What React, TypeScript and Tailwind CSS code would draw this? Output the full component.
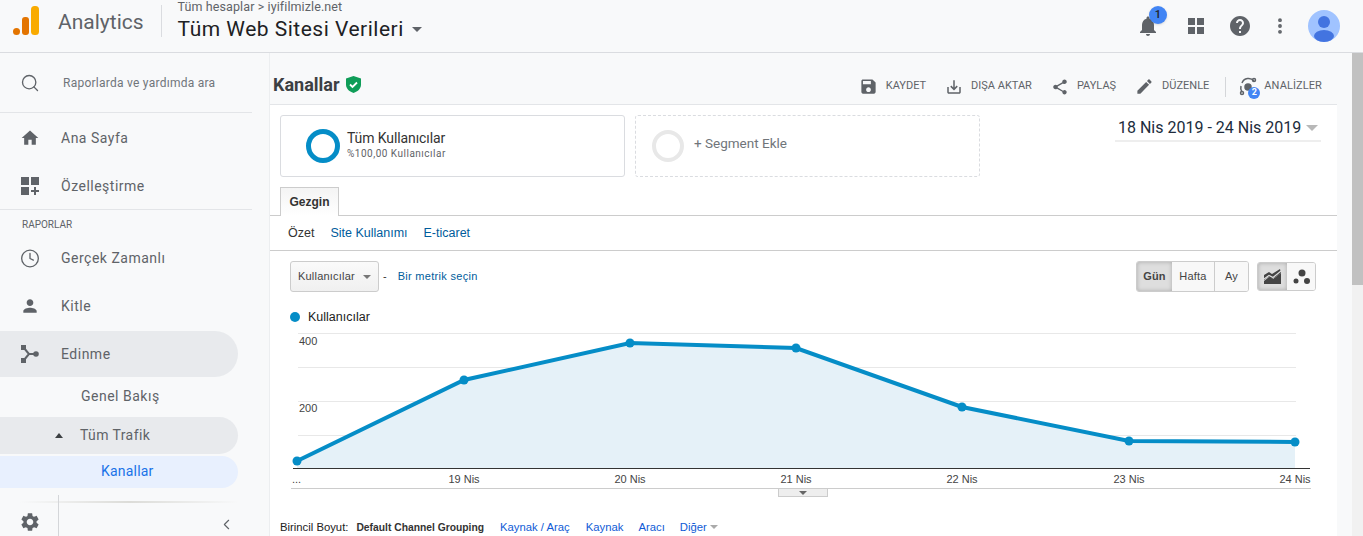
import React from 'react';
import { Search, Clock, ChevronLeft, MoreVertical } from 'lucide-react';

const points = [[297, 461], [464, 380], [630, 343], [796, 348], [962, 407], [1129, 441], [1295, 442]].map(([x, y]) => [x - 290, y - 330]);
const line = points.map((p) => p.join(',')).join(' ');

const Mat = ({ d, size = 20, className = '' }: { d: string; size?: number; className?: string }) => (
  <svg width={size} height={size} viewBox="0 0 24 24" fill="#5f6368" className={className}><path d={d} /></svg>
);

const NavItem = ({ icon, label, className = '' }: { icon: React.ReactNode; label: string; className?: string }) => (
  <div className={`h-[46px] w-[238px] flex items-center pl-[20px] rounded-r-[23px] ${className}`}>
    <span className="w-[20px] h-[20px] flex items-center justify-center text-[#5f6368] shrink-0">{icon}</span>
    <span className="ml-[21px] text-[14px] tracking-[0.5px] text-[#5f6368]">{label}</span>
  </div>
);

const Action = ({ icon, label }: { icon: React.ReactNode; label: string }) => (
  <div className="flex items-center gap-[8px]">
    {icon}
    <span className="text-[11px] text-[#5f6368]">{label}</span>
  </div>
);

const Sidebar = () => (
  <aside className="w-[270px] shrink-0 flex flex-col overflow-hidden relative border-r border-[#eceef0]">
    <div className="h-[60px] flex items-center pl-[20px] mr-[17px] border-b border-[#e3e5e8] shrink-0">
      <Search size={20} strokeWidth={1.6} className="text-[#5f6368]" />
      <span className="ml-[23px] text-[12px] tracking-[0.25px] text-[#70757a]">Raporlarda ve yardımda ara</span>
    </div>
    <div className="pt-[2px] pb-[1px] flex flex-col gap-[2px]">
      <NavItem icon={<Mat size={24} d="M10 20v-6h4v6h5v-8h3L12 3 2 12h3v8z" />} label="Ana Sayfa" />
      <NavItem icon={
        <svg width="20" height="20" viewBox="0 0 20 20" fill="#5f6368"><rect x="1" y="1" width="8" height="8" /><rect x="1" y="11" width="8" height="8" /><rect x="11" y="1" width="8" height="8" /><path d="M14 11h2v3h3v2h-3v3h-2v-3h-3v-2h3z" /></svg>
      } label="Özelleştirme" />
    </div>
    <div className="mr-[17px] border-t border-[#e3e5e8] h-[27px] pl-[22px] pt-[9px] mt-[-1px]">
      <span className="block text-[10px] leading-[12px] text-[#5f6368]">RAPORLAR</span>
    </div>
    <div className="flex flex-col gap-[2px] mt-[-1px]">
      <NavItem icon={<Clock size={21} strokeWidth={1.6} />} label="Gerçek Zamanlı" />
      <NavItem icon={<Mat size={24} d="M12 12c2.210 0 4-1.790 4-4s-1.790-4-4-4-4 1.790-4 4 1.790 4 4 4zm0 2c-2.670 0-8 1.340-8 4v2h16v-2c0-2.660-5.330-4-8-4z" />} label="Kitle" />
      <NavItem className="bg-[#e8eaed]" icon={
        <svg width="20" height="20" viewBox="0 0 20 20" fill="#5f6368"><rect x="1" y="1" width="5" height="5" /><rect x="1" y="14" width="5" height="5" /><circle cx="16" cy="10" r="2.800" /><path d="M4 4l5 6-5 6" stroke="#5f6368" strokeWidth="2" fill="none" /><path d="M9 10h6" stroke="#5f6368" strokeWidth="2" /></svg>
      } label="Edinme" />
    </div>
    <div className="h-[40px] flex items-center pb-[2px] pl-[81px] text-[14px] tracking-[0.5px] text-[#5f6368]">Genel Bakış</div>
    <div className="h-[37px] w-[238px] bg-[#e8eaed] rounded-r-[19px] flex items-center pl-[55px] text-[14px] tracking-[0.4px] text-[#5f6368]">
      <span className="w-0 h-0 border-x-[4px] border-x-transparent border-b-[5px] border-b-[#3c4043]" />
      <span className="ml-[17px]">Tüm Trafik</span>
    </div>
    <div className="h-[32px] w-[238px] mt-[2px] pb-[2px] bg-[#e8f0fe] rounded-r-[16px] flex items-center pl-[101px] text-[14px] tracking-[0.2px] text-[#1a73e8]">Kanallar</div>
    <div className="absolute left-[20px] right-[30px] top-[448px] h-[2px] bg-gradient-to-r from-transparent via-[#dcdcd8] to-transparent" />
    <div className="absolute left-0 bottom-0 w-[238px] h-[42px] flex items-end pb-[3px]">
      <span className="ml-[19px] w-[22px] h-[22px] flex items-center justify-center">
        <Mat size={24} d="M19.140 12.940c.04-.3.06-.61.06-.94 0-.32-.02-.64-.07-.94l2.030-1.580c.18-.14.23-.41.12-.61l-1.920-3.320c-.12-.22-.37-.29-.59-.22l-2.390.96c-.5-.38-1.030-.7-1.620-.94l-.36-2.540c-.04-.24-.24-.41-.48-.41h-3.840c-.24 0-.43.17-.47.41l-.36 2.540c-.59.24-1.130.57-1.620.94l-2.390-.96c-.22-.08-.47 0-.59.22L2.740 8.870c-.12.21-.08.47.12.61l2.030 1.580c-.05.3-.09.63-.09.94s.02.64.07.94l-2.030 1.580c-.18.14-.23.41-.12.61l1.920 3.320c.12.22.37.29.59.22l2.390-.96c.5.38 1.030.7 1.620.94l.36 2.540c.05.24.24.41.48.41h3.840c.24 0 .44-.17.47-.41l.36-2.540c.59-.24 1.130-.56 1.620-.94l2.390.96c.22.08.47 0 .59-.22l1.920-3.320c.12-.22.07-.47-.12-.61l-2.010-1.580zM12 15.600c-1.980 0-3.600-1.620-3.600-3.600s1.620-3.600 3.600-3.600 3.600 1.620 3.600 3.600-1.620 3.600-3.600 3.600z" />
      </span>
      <span className="ml-[17px] h-[41px] mb-[-3px] border-l border-[#d4d6d9]" />
      <ChevronLeft size={17} strokeWidth={1.6} className="ml-[159px] text-[#5f6368]" />
    </div>
  </aside>
);

const Chart = () => (
  <svg width="1030" height="166" viewBox="0 0 1030 166" className="block">
    {[3, 37, 71, 105].map((y) => (
      <line key={y} x1="8" x2="1006" y1={y + 0.5} y2={y + 0.5} stroke="#e8e8e8" />
    ))}
    <polygon points={`7,138 ${line} 1005,138`} fill="#e5f1f8" />
    <line x1="3" x2="1020" y1="138.5" y2="138.5" stroke="#333333" />
    <polyline points={line} fill="none" stroke="#058dc7" strokeWidth="4" />
    {points.map(([x, y]) => <circle key={x} cx={x} cy={y} r="4.5" fill="#058dc7" />)}
    <text x="9" y="15" fontSize="11" fill="#444" fontFamily="Liberation Sans">400</text>
    <text x="9" y="82" fontSize="11" fill="#444" fontFamily="Liberation Sans">200</text>
    <text x="2" y="153" fontSize="11" fill="#444" fontFamily="Liberation Sans">...</text>
    {[['19 Nis', 174], ['20 Nis', 340], ['21 Nis', 506], ['22 Nis', 672], ['23 Nis', 839], ['24 Nis', 1005]].map(([t, x]) => (
      <text key={t} x={x} y="153" fontSize="11" textAnchor="middle" fill="#444" fontFamily="Liberation Sans">{t}</text>
    ))}
  </svg>
);

const App: React.FC = () => (
  <div className="w-[1363px] h-[536px] overflow-hidden bg-[#f8f9fa] flex flex-col font-['Roboto',sans-serif]">
    <header className="h-[53px] shrink-0 border-b border-[#dadce0] flex items-center">
      <svg width="26" height="29" viewBox="0 0 26 29" className="ml-[13px] mt-[-11px]">
        <circle cx="3.500" cy="25.500" r="3.500" fill="#e37400" />
        <rect x="9" y="11" width="7" height="18" rx="3" fill="#e37400" />
        <rect x="18" y="0" width="8" height="29" rx="3.500" fill="#f9ab00" />
      </svg>
      <span className="ml-[19px] text-[21px] text-[#5f6368] mt-[-7px]">Analytics</span>
      <span className="ml-[17px] h-[32px] border-l border-[#dadce0] mt-[-10px]" />
      <div className="ml-[16px] flex flex-col h-[53px]">
        <span className="text-[12.500px] leading-[13px] tracking-[0.1px] text-[#5f6368]">Tüm hesaplar &gt; iyifilmizle.net</span>
        <div className="flex items-center mt-[3px]">
          <span className="text-[21px] leading-[26px] tracking-[0.5px] text-[#202124]">Tüm Web Sitesi Verileri</span>
          <span className="ml-[8px] mt-[2px] w-0 h-0 border-x-[5px] border-x-transparent border-t-[5px] border-t-[#5f6368]" />
        </div>
      </div>
      <div className="ml-auto flex items-center pr-[23px]">
        <span className="relative w-[24px] h-[24px] flex items-center justify-center">
          <Mat size={24} d="M12 22c1.100 0 2-.9 2-2h-4c0 1.100.89 2 2 2zm6-6v-5c0-3.070-1.640-5.640-4.500-6.320V4c0-.83-.67-1.500-1.500-1.500s-1.500.67-1.500 1.500v.68C7.630 5.360 6 7.920 6 11v5l-2 2v1h16v-1l-2-2z" />
          <span className="absolute left-[13px] top-[-8px] w-[18px] h-[18px] rounded-full bg-[#4285f4] text-[11px] font-medium text-[#202124] flex items-center justify-center shadow">1</span>
        </span>
        <svg width="18" height="18" viewBox="0 0 18 18" fill="#5f6368" className="ml-[27px]"><rect x="1" y="1" width="7" height="7" /><rect x="10" y="1" width="7" height="7" /><rect x="1" y="10" width="7" height="7" /><rect x="10" y="10" width="7" height="7" /></svg>
        <span className="ml-[23px]">
          <Mat size={24} d="M12 2C6.480 2 2 6.480 2 12s4.480 10 10 10 10-4.480 10-10S17.520 2 12 2zm1 17h-2v-2h2v2zm2.070-7.750l-.9.92C13.450 12.900 13 13.500 13 15h-2v-.5c0-1.100.45-2.100 1.170-2.830l1.240-1.260c.37-.36.59-.86.59-1.410 0-1.100-.9-2-2-2s-2 .9-2 2H8c0-2.210 1.790-4 4-4s4 1.790 4 4c0 .88-.36 1.680-.93 2.250z" />
        </span>
        <MoreVertical size={20} className="ml-[18px] text-[#5f6368]" strokeWidth={2.6} />
        <svg width="32" height="32" viewBox="0 0 32 32" className="ml-[18px]"><circle cx="16" cy="16" r="16" fill="#a0c3ff" /><circle cx="16" cy="12" r="6" fill="#4374e0" /><ellipse cx="16" cy="26" rx="10" ry="6" fill="#4374e0" /></svg>
      </div>
    </header>
    <div className="flex-1 flex min-h-0">
      <Sidebar />
      <main className="w-[1067px] shrink-0 flex flex-col">
        <div className="h-[52px] shrink-0 flex items-center border-b border-[#e3e5e8] pt-[12px]">
          <span className="ml-[3px] text-[18px] font-bold text-[#3c4043]">Kanallar</span>
          <svg width="15" height="17" viewBox="0 0 15 17" className="ml-[6px]"><path d="M7.500 0 15 2.500v6c0 4-3 7-7.500 8.500C3 15.500 0 12.500 0 8.500v-6z" fill="#0f9d58" /><path d="M4 8.500l2.500 2.500 4.500-4.500" stroke="#fff" strokeWidth="1.800" fill="none" /></svg>
          <div className="ml-auto mt-[4px] flex items-center gap-[19px] pr-[15px]">
            <Action icon={<Mat size={19} d="M17 3H5c-1.110 0-2 .9-2 2v14c0 1.100.89 2 2 2h14c1.100 0 2-.9 2-2V7l-4-4zm-5 16c-1.660 0-3-1.340-3-3s1.340-3 3-3 3 1.340 3 3-1.340 3-3 3zm3-10H5V5h10v4z" />} label="KAYDET" />
            <Action icon={<Mat size={18} d="M19 12v7H5v-7H3v7c0 1.100.9 2 2 2h14c1.100 0 2-.9 2-2v-7h-2zm-6 .67l2.590-2.580L17 11.500l-5 5-5-5 1.410-1.410L11 12.670V3h2z" />} label="DIŞA AKTAR" />
            <Action icon={<Mat size={18} d="M18 16.080c-.76 0-1.440.3-1.960.77L8.910 12.700c.05-.23.09-.46.09-.7s-.04-.47-.09-.7l7.050-4.110c.54.5 1.250.81 2.040.81 1.660 0 3-1.340 3-3s-1.340-3-3-3-3 1.340-3 3c0 .24.04.47.09.7L8.040 9.810C7.500 9.310 6.790 9 6 9c-1.660 0-3 1.340-3 3s1.340 3 3 3c.79 0 1.500-.31 2.040-.81l7.120 4.160c-.05.21-.08.43-.08.65 0 1.610 1.310 2.920 2.920 2.920 1.610 0 2.920-1.310 2.920-2.920s-1.310-2.920-2.920-2.920z" />} label="PAYLAŞ" />
            <Action icon={<Mat size={19} d="M3 17.250V21h3.750L17.810 9.940l-3.750-3.750L3 17.250zM20.710 7.040c.39-.39.39-1.020 0-1.410l-2.340-2.340c-.39-.39-1.020-.39-1.410 0l-1.830 1.830 3.750 3.750 1.830-1.830z" />} label="DÜZENLE" />
            <span className="h-[20px] border-l border-[#d4d6d9] ml-[-3px]" />
            <div className="flex items-center gap-[5px] ml-[-6px]">
              <span className="relative w-[20px] h-[20px]">
                <svg width="20" height="20" viewBox="0 0 20 20" fill="none" stroke="#5f6368" strokeWidth="1.500"><path d="M3 6a7 7 0 0 1 12-2" /><path d="M3 15a7 7 0 0 1-1-6" /><circle cx="9" cy="10" r="3" fill="#5f6368" /><circle cx="3" cy="16" r="1.500" /><circle cx="15" cy="3" r="1.500" /></svg>
                <span className="absolute left-[9px] top-[10px] w-[12px] h-[12px] rounded-full bg-[#4285f4] text-[9px] font-bold text-white flex items-center justify-center">2</span>
              </span>
              <span className="text-[11px] tracking-[0.1px] text-[#5f6368]">ANALİZLER</span>
            </div>
          </div>
        </div>
        <div className="flex-1 bg-white flex flex-col min-h-0">
          <div className="flex pt-[10px] pl-[10px] pr-[16px] h-[82px] shrink-0">
            <div className="w-[345px] h-[62px] border border-[#dadce0] rounded-[3px] flex items-center pl-[25px]">
              <span className="w-[34px] h-[34px] rounded-full border-[5px] border-[#058dc7]" />
              <div className="ml-[7px] flex flex-col mt-[-2px]">
                <span className="text-[14px] leading-[17px] tracking-[-0.1px] text-[#333]">Tüm Kullanıcılar</span>
                <span className="text-[10px] leading-[13px] tracking-[0.5px] text-[#5f6368]">%100,00 Kullanıcılar</span>
              </div>
            </div>
            <div className="ml-[10px] w-[345px] h-[62px] border border-dashed border-[#dadce0] rounded-[3px] flex items-center pl-[16px]">
              <span className="w-[32px] h-[32px] rounded-full border-[4px] border-[#e8e8e8]" />
              <span className="ml-[10px] mt-[-5px] text-[13.500px] text-[#70757a]">+ Segment Ekle</span>
            </div>
            <div className="ml-auto w-[206px] h-[27px] border-b-2 border-[#eeeeee] flex items-center justify-between pl-[3px] pr-[3px]">
              <span className="text-[16px] text-[#202c3c] whitespace-nowrap">18 Nis 2019 - 24 Nis 2019</span>
              <span className="w-0 h-0 border-x-[6px] border-x-transparent border-t-[6px] border-t-[#b8b8b8]" />
            </div>
          </div>
          <div className="h-[29px] shrink-0 border-b border-[#cccccc] pl-[10px] flex items-end">
            <div className="h-[29px] w-[59px] border border-b-0 border-[#cccccc] bg-gradient-to-b from-[#f4f4f4] to-white mb-[-1px] text-[12px] font-bold text-[#333] flex items-center justify-center font-['Liberation_Sans',sans-serif]">Gezgin</div>
          </div>
          <div className="h-[35px] shrink-0 border-b border-[#cccccc] flex items-center pl-[18px] gap-[16px] text-[12.500px] font-['Liberation_Sans',sans-serif] text-[#005c9c]">
            <span className="text-[#333]">Özet</span>
            <span>Site Kullanımı</span>
            <span>E-ticaret</span>
          </div>
          <div className="h-[31px] mt-[10px] shrink-0 flex items-center pl-[20px] pr-[21px] font-['Liberation_Sans',sans-serif]">
            <div className="w-[89px] h-[31px] border border-[#cccccc] rounded-[3px] bg-gradient-to-b from-[#fafafa] to-[#f0f0f0] flex items-center pl-[7px] text-[11px] tracking-[0.2px] text-[#444]">
              Kullanıcılar
              <span className="ml-[8px] w-0 h-0 border-x-[4px] border-x-transparent border-t-[4px] border-t-[#777]" />
            </div>
            <span className="ml-[4px] text-[11px] text-[#333]">-</span>
            <span className="ml-[11px] text-[11px] tracking-[0.3px] text-[#005c9c]">Bir metrik seçin</span>
            <div className="ml-auto flex items-center">
              <div className="flex h-[31px] border border-[#cccccc] rounded-[3px] text-[11px] tracking-[0.2px] text-[#444] overflow-hidden">
                <span className="w-[35px] bg-[#dedede] shadow-[inset_0_0_4px_#aaaaaa] font-bold flex items-center justify-center">Gün</span>
                <span className="w-[43px] bg-[#f8f8f8] border-r border-[#cccccc] flex items-center justify-center">Hafta</span>
                <span className="w-[33px] bg-[#f8f8f8] flex items-center justify-center">Ay</span>
              </div>
              <div className="ml-[8px] flex h-[29px] border border-[#cccccc] rounded-[3px] overflow-hidden">
                <span className="w-[29px] bg-[#dedede] shadow-[inset_0_0_4px_#aaaaaa] flex items-center justify-center">
                  <svg width="17" height="15" viewBox="0 0 17 15"><path d="M0 6l5-3 3 2 8-5 1 4-4 3-5 3-4-2-4 3z" fill="#444" /><path d="M0 12l5-4 4 2 8-6v11H0z" fill="#444" /><path d="M0 10l5-3.500 4 2 8-6.500" stroke="#dedede" strokeWidth="1.200" fill="none" /></svg>
                </span>
                <span className="w-[28px] bg-[#f8f8f8] flex items-center justify-center">
                  <svg width="17" height="15" viewBox="0 0 17 15" fill="#444"><circle cx="9" cy="4" r="3.500" /><circle cx="3" cy="12" r="2.500" /><circle cx="14" cy="12" r="3" /></svg>
                </span>
              </div>
            </div>
          </div>
          <div className="h-[26px] mt-[12px] shrink-0 flex items-center pl-[20px] font-['Liberation_Sans',sans-serif]">
            <span className="w-[10px] h-[10px] rounded-full bg-[#058dc7]" />
            <span className="ml-[8px] text-[12.500px] text-[#222]">Kullanıcılar</span>
          </div>
          <div className="pl-[20px] h-[149px] shrink-0">
            <Chart />
          </div>
          <div className="mx-[21px] w-[1020px] border-t border-[#cccccc] relative shrink-0 mt-[9px]">
            <div className="absolute left-[487px] top-0 w-[50px] h-[8px] bg-[#eeeeee] border-x border-b border-[#cccccc] flex items-center justify-center">
              <span className="w-0 h-0 border-x-[4px] border-x-transparent border-t-[4px] border-t-[#666]" />
            </div>
          </div>
          <div className="pl-[10px] pt-[30px] flex items-center text-[11.300px] font-['Liberation_Sans',sans-serif] text-[#0f5bd6] whitespace-nowrap">
            <span className="text-[#222]">Birincil Boyut:</span>
            <span className="ml-[8px] text-[10.300px] font-bold text-[#333]">Default Channel Grouping</span>
            <span className="ml-[16px]">Kaynak / Araç</span>
            <span className="ml-[16px]">Kaynak</span>
            <span className="ml-[15px]">Aracı</span>
            <span className="ml-[15px]">Diğer</span>
            <span className="ml-[3px] w-0 h-0 border-x-[4px] border-x-transparent border-t-[4px] border-t-[#aaa]" />
          </div>
        </div>
      </main>
      <div className="w-[15px] shrink-0" />
      <div className="w-[11px] shrink-0 bg-[#f1f1f1]">
        <div className="h-[232px] bg-[#c1c1c1]" />
      </div>
    </div>
  </div>
);

export default App;
